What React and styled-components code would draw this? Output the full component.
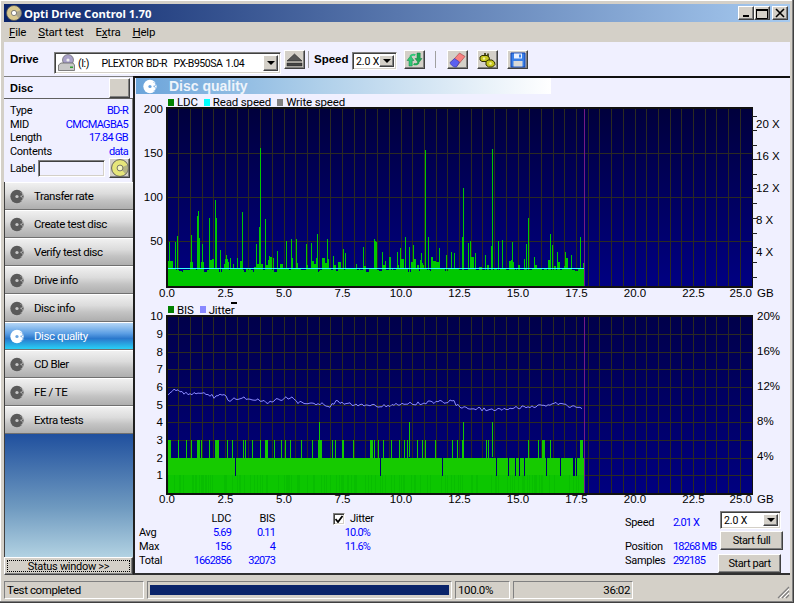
import styled, { createGlobalStyle, css } from "styled-components";

const GlobalStyle = createGlobalStyle`
  html, body { margin: 0; padding: 0; background: #d4d0c8; overflow: hidden; }
  body { font-family: Roboto, "Liberation Sans", Arial, sans-serif; font-size: 11px; letter-spacing: -0.3px; color: #000; }
  * { box-sizing: border-box; }
`;

const raised = css`
  background: #d4d0c8;
  border: 1px solid;
  border-color: #fff #404040 #404040 #fff;
  box-shadow: inset -1px -1px 0 #808080;
`;

const sunken = css`
  border: 1px solid;
  border-color: #808080 #fff #fff #808080;
  box-shadow: inset 1px 1px 0 #404040, inset -1px -1px 0 #d4d0c8;
`;

const Window = styled.div`
  width: 794px;
  height: 603px;
  padding: 4px;
  display: flex;
  flex-direction: column;
  background: #d4d0c8;
  box-shadow: inset -1px -1px 0 #404040, inset -2px -2px 0 #808080, inset 1px 1px 0 #fff;
`;

const TitleBar = styled.div`
  height: 18px;
  flex: none;
  display: flex;
  align-items: center;
  padding: 0 2px;
  background: linear-gradient(90deg, #0a246a, #a6caf0);
  color: #fff;
`;

const TitleText = styled.span`
  margin-left: 2px;
  font-family: "Noto Sans", sans-serif;
  font-weight: 700;
  font-size: 11.3px;
  letter-spacing: 0;
  white-space: nowrap;
`;

const WindowButtons = styled.div`
  margin-left: auto;
  display: flex;
`;

const WindowButton = styled.button`
  ${raised}
  width: 16px;
  height: 14px;
  padding: 0;
  margin-left: ${(p) => (p.$gap ? "2px" : "0")};
  display: flex;
  align-items: center;
  justify-content: center;
`;

const MenuBar = styled.div`
  height: 20px;
  flex: none;
  display: flex;
  align-items: center;
  padding-left: 5px;
  gap: 12px;
  font-size: 11.5px;
  letter-spacing: -0.2px;
`;

const MenuItem = styled.span`
  u { text-decoration: underline; }
`;

const Toolbar = styled.div`
  height: 34px;
  flex: none;
  display: flex;
  align-items: flex-start;
  background: #f0f0ff;
  padding: 8px 0 0 6px;
`;

const ToolLabel = styled.b`
  font-family: "Liberation Sans", Arial, sans-serif;
  font-size: 11.5px;
  letter-spacing: 0;
  line-height: 18px;
  width: ${(p) => p.$w}px;
  margin-left: ${(p) => p.$left || 0}px;
  flex: none;
`;

const Combo = styled.div`
  ${sunken}
  background: #fff;
  display: flex;
  align-items: center;
  width: ${(p) => p.$w}px;
  height: ${(p) => p.$h}px;
  margin-top: ${(p) => p.$top || 0}px;
  margin-left: ${(p) => p.$left || 0}px;
  padding: 2px 2px 2px 3px;
  flex: none;
  white-space: nowrap;
`;

const ComboText = styled.span`
  flex: 1;
  min-width: 0;
  display: flex;
  align-items: center;
  gap: ${(p) => (p.$gap ? "3px" : "0")};
  font-size: ${(p) => (p.$gap ? "10.5px" : "10.5px")};
  letter-spacing: ${(p) => (p.$gap ? "-0.45px" : "-0.1px")};
  word-spacing: ${(p) => (p.$gap ? "1px" : "0")};
`;

const ComboArrow = styled.span`
  ${raised}
  width: 15px;
  height: 100%;
  flex: none;
  display: flex;
  align-items: center;
  justify-content: center;
  &::after {
    content: "";
    border: 4px solid transparent;
    border-top: 4px solid #000;
    border-bottom: 0;
  }
`;

const ToolButton = styled.button`
  ${raised}
  width: 21px;
  height: 19px;
  padding: 0;
  margin-left: ${(p) => p.$left || 0}px;
  flex: none;
  display: flex;
  align-items: center;
  justify-content: center;
`;

const ToolSep = styled.span`
  width: 1px;
  height: 17px;
  margin: 1px 0 0 ${(p) => p.$left}px;
  background: #a0a0a0;
  flex: none;
`;

const Body = styled.div`
  height: 499px;
  flex: none;
  display: flex;
`;

const Sidebar = styled.div`
  width: 129px;
  flex: none;
  display: flex;
  flex-direction: column;
  background: #f0f0ff;
`;

const DiscHeader = styled.div`
  height: 23px;
  flex: none;
  display: flex;
  align-items: center;
  justify-content: space-between;
  padding: 0 3px 0 6px;
  border-top: 1px solid #808080;
  border-bottom: 1px solid #606060;
  font-family: "Liberation Sans", Arial, sans-serif;
  font-weight: 700;
  font-size: 11px;
  letter-spacing: 0;
`;

const SquareButton = styled.span`
  ${raised}
  width: 21px;
  height: 20px;
  display: flex;
  align-items: center;
  justify-content: center;
  flex: none;
`;

const DiscInfo = styled.div`
  height: 83px;
  flex: none;
  padding: 5px 4px 0 6px;
  border-right: 1px solid #808080;
`;

const InfoRow = styled.div`
  height: 13.6px;
  display: flex;
  justify-content: space-between;
  align-items: center;
`;

const InfoValue = styled.span`
  color: #0000ff;
  letter-spacing: -0.7px;
`;

const LabelRow = styled.div`
  display: flex;
  align-items: center;
`;

const LabelCaption = styled.span`
  width: 28px;
  flex: none;
`;

const LabelInput = styled.span`
  ${sunken}
  width: 67px;
  height: 17px;
  margin-right: 4px;
  background: #f0f0ff;
  flex: none;
`;

const Nav = styled.div`
  flex: none;
  border-left: 1px solid #404040;
`;

const NavButton = styled.div`
  height: 28px;
  display: flex;
  align-items: center;
  padding-left: 5px;
  gap: 9px;
  font-size: 11.5px;
  letter-spacing: -0.45px;
  border-top: 1px solid #fff;
  border-bottom: 1px solid #707070;
  color: ${(p) => (p.$active ? "#fff" : "#000")};
  background: ${(p) =>
    p.$active
      ? "linear-gradient(180deg, #b4d6f6 0%, #5c9fe4 40%, #2a78cc 60%, #28d0f6 100%)"
      : "linear-gradient(180deg, #f0f0f0 0%, #dcdcdc 40%, #c4c4c4 65%, #aeaeae 100%)"};
`;

const Filler = styled.div`
  flex: 1;
  border-left: 1px solid #404040;
  background: linear-gradient(180deg, #20509e 0%, #6f9ac0 60%, #b2d2e2 100%);
`;

const StatusWindowButton = styled.div`
  ${raised}
  height: 18px;
  flex: none;
  display: flex;
  padding: 2px;
  span {
    flex: 1;
    text-align: center;
    line-height: 11px;
    border: 1px dotted #000;
  }
`;

const Main = styled.div`
  flex: 1;
  display: flex;
  flex-direction: column;
  background: #f0f0ff;
  padding-left: 1px;
  border-left: 2px solid #202020;
  border-top: 2px solid #101010;
  border-bottom: 2px solid #303030;
`;

const Banner = styled.div`
  width: 415px;
  height: 16px;
  flex: none;
  margin-bottom: 2px;
  display: flex;
  align-items: center;
  padding-left: 7px;
  gap: 11px;
  background: linear-gradient(90deg, #6ba4da 0%, #b0d0ea 45%, #fff 100%);
  color: #eef4fb;
  font-family: "Liberation Sans", Arial, sans-serif;
  font-weight: 700;
  font-size: 14px;
  letter-spacing: 0;
`;

const Legend = styled.div`
  height: ${(p) => p.$h}px;
  flex: none;
  display: flex;
  align-items: center;
  gap: 3px;
  padding-left: 32px;
  font-size: 11.5px;
  letter-spacing: -0.15px;
  position: relative;
`;

const Swatch = styled.i`
  width: 6px;
  height: 7px;
  background: ${(p) => p.$c};
  flex: none;
`;

const LegendText = styled.span`
  margin-right: 3px;
`;

const Marker = styled.i`
  position: absolute;
  left: 95px;
  top: -1px;
  width: 6px;
  height: 2px;
  background: #000;
`;

const PlotSvg = styled.svg`
  display: block;
  flex: none;
  overflow: visible;
  text { font-family: "Liberation Sans", Arial, sans-serif; font-size: 11.5px; letter-spacing: 0; fill: #000; }
`;

const Stats = styled.div`
  height: 62px;
  flex: none;
  display: flex;
  padding-left: 3px;
`;

const StatGrid = styled.div`
  display: grid;
  grid-template-columns: 40px 52px 44px 58px 37px;
  grid-template-rows: 13px 14px 14px 14px;
  align-items: center;
  padding-top: 1px;
  flex: none;
`;

const Num = styled.span`
  text-align: ${(p) => (p.$left ? "left" : "right")};
  color: ${(p) => (p.$head ? "#000" : "#0000ff")};
  letter-spacing: ${(p) => (p.$head ? "-0.3px" : "-0.85px")};
  white-space: nowrap;
`;

const JitterCheck = styled.label`
  display: flex;
  align-items: center;
  gap: 5px;
  white-space: nowrap;
`;

const CheckBox = styled.span`
  ${sunken}
  width: 12px;
  height: 12px;
  background: #fff;
  display: flex;
  align-items: center;
  justify-content: center;
  flex: none;
`;

const Readout = styled.div`
  display: grid;
  grid-template-columns: 48px 42px;
  grid-template-rows: 24px 14px 14px;
  align-items: start;
  width: 90px;
  flex: none;
  margin-left: 255px;
  padding-top: 5px;
  white-space: nowrap;
`;

const Actions = styled.div`
  margin-left: auto;
  margin-right: 7px;
  width: 65px;
  flex: none;
  display: flex;
  flex-direction: column;
  align-items: flex-start;
`;

const ActionButton = styled.button`
  ${raised}
  width: 63px;
  height: 19px;
  padding: 0;
  margin-left: ${(p) => p.$left || 0}px;
  margin-top: ${(p) => p.$top}px;
  font-family: inherit;
  font-size: 11px;
  letter-spacing: -0.4px;
  color: #000;
`;

const StatusBar = styled.div`
  height: 18px;
  flex: none;
  margin-top: 6px;
  display: flex;
  gap: 3px;
  font-size: 11.5px;
  letter-spacing: -0.4px;
`;

const StatusCell = styled.div`
  width: ${(p) => p.$w}px;
  flex: none;
  display: flex;
  align-items: center;
  justify-content: ${(p) => (p.$right ? "flex-end" : "flex-start")};
  padding: 0 2px;
  border: 1px solid;
  border-color: #808080 #fff #fff #808080;
  white-space: nowrap;
`;

const ProgressFill = styled.div`
  width: 100%;
  height: 10px;
  background: #0a246a;
`;

const Grip = styled.svg`
  margin-left: auto;
  align-self: flex-end;
`;

function mulberry(seed) {
  let s = seed;
  return () => {
    s = (s * 1664525 + 1013904223) >>> 0;
    return s / 4294967296;
  };
}

const X_STEP = 585 / 50;
const PLOT_X = 31;
const DATA_END = 417;

// [x, height] of the tall LDC spikes, in plot pixels
const LDC_SPIKES = [
  [2, 44], [8, 44], [10, 50], [24, 51], [30, 70], [31, 75], [32, 48], [35, 42], [42, 68], [48, 86], [49, 68],
  [53, 36], [59, 31], [63, 28], [75, 74], [89, 42], [92, 59], [93, 138], [98, 67], [102, 30], [110, 35], [119, 45],
  [124, 47], [129, 47], [139, 42], [144, 43], [150, 52], [160, 47], [166, 30], [176, 37], [178, 33], [196, 39],
  [207, 47], [208, 45], [209, 44], [215, 34], [230, 34], [233, 38], [238, 49], [242, 39], [246, 41], [254, 33],
  [258, 136], [261, 49], [272, 38], [279, 31], [284, 34], [287, 33], [295, 49], [296, 98], [301, 43], [303, 45],
  [308, 33], [318, 31], [324, 40], [325, 137], [331, 45], [335, 46], [345, 44], [357, 27], [359, 42], [361, 68],
  [367, 29], [383, 52], [385, 41], [390, 34], [398, 34], [404, 31], [413, 49],
];

const BIS_THREE = [
  0, 1, 2, 3, 11, 19, 24, 30, 31, 32, 34, 42, 48, 49, 50, 51, 60, 65, 76, 78, 85, 93, 98, 99, 100, 107, 114, 118, 123,
  134, 145, 151, 152, 153, 154, 165, 168, 175, 176, 186, 203, 204, 205, 207, 211, 216, 224, 232, 237, 240, 250, 255,
  258, 268, 285, 290, 295, 296, 319, 321, 361, 371, 375, 376, 377, 383, 413, 414, 415,
];
const BIS_FOUR = [152, 242, 296, 325];
const BIS_GAPS = [68, 213, 275, 329, 341, 348, 352, 357, 379, 393, 406, 407, 409];

// control points of the jitter trace
const JITTER_POINTS = [
  [1, 80], [7, 73], [18, 78], [40, 77], [48, 82], [58, 77], [61, 84], [78, 82], [101, 86], [123, 81], [131, 86],
  [155, 88], [163, 91], [168, 86], [208, 90], [286, 85], [291, 90], [308, 93], [331, 94], [358, 91], [389, 88], [415, 92],
];

function jitterLine() {
  const rnd = mulberry(77);
  const pts = [];
  for (let x = 1; x <= 415; x += 2) {
    let i = 0;
    while (i < JITTER_POINTS.length - 2 && JITTER_POINTS[i + 1][0] < x) i++;
    const [x0, y0] = JITTER_POINTS[i];
    const [x1, y1] = JITTER_POINTS[i + 1];
    const y = y0 + ((y1 - y0) * (x - x0)) / (x1 - x0) + (rnd() - 0.5) * 3.5;
    pts.push(`${x},${y.toFixed(1)}`);
  }
  return pts.join(" ");
}

function ldcPath() {
  const rnd = mulberry(12345);
  let d = "";
  let x = 0;
  while (x < DATA_END) {
    const r = rnd();
    let h = 16 + Math.floor(rnd() * 2);
    let w = 1 + Math.floor(rnd() * 3);
    if (r < 0.35) {
      h = 18 + Math.floor(rnd() * 12);
      w = 1 + Math.floor(rnd() * 3);
    } else if (r < 0.45) h = 14 + Math.floor(rnd() * 2);
    for (let i = 0; i < w && x < DATA_END; i++, x++) d += `M${x + 0.5} 178V${178 - h}`;
  }
  LDC_SPIKES.forEach(([sx, h]) => {
    d += `M${sx + 0.5} 178V${178 - h}`;
  });
  return d;
}

function Frame({ height, gridY, children, id, top, bottom }) {
  const vertical = Array.from({ length: 49 }, (_, i) => (i + 1) * X_STEP);
  return (
    <>
      <defs>
        <linearGradient id={id} x1="0" y1="0" x2="0" y2="1">
          <stop offset="0" stopColor={top} />
          <stop offset="1" stopColor={bottom} />
        </linearGradient>
      </defs>
      <rect x="0" y="0" width="585" height={height} fill={`url(#${id})`} />
      <g stroke="#2b2a22" strokeWidth="1" shapeRendering="crispEdges">
        {vertical.map((x) => (
          <line key={x} x1={x} x2={x} y1="0" y2={height} />
        ))}
        {gridY.map((y) => (
          <line key={y} x1="0" x2="585" y1={y} y2={y} />
        ))}
      </g>
      {children}
      <line x1={DATA_END + 0.5} x2={DATA_END + 0.5} y1="0" y2={height} stroke="#741a86" shapeRendering="crispEdges" />
      <g fill="#101010" shapeRendering="crispEdges">
        <rect x="-1" y="-1" width="587" height="2" />
        <rect x="-1" y={height} width="587" height="2" />
        <rect x="-1" y="-1" width="2" height={height + 2} />
        <rect x="585" y="-1" width="1" height={height + 2} />
      </g>
    </>
  );
}

function XLabels({ y }) {
  const labels = [];
  for (let i = 0; i < 10; i++) labels.push(i * 2.5);
  return (
    <>
      {labels.map((v) => (
        <text key={v} x={(v / 25) * 585} y={y} textAnchor="middle">
          {v.toFixed(1)}
        </text>
      ))}
      <text x="585" y={y} textAnchor="end">25.0</text>
      <text x="590" y={y}>GB</text>
    </>
  );
}

function LdcChart() {
  return (
    <PlotSvg width="654" height="195" viewBox="0 0 654 195">
      <g transform={`translate(${PLOT_X},0)`}>
        <Frame id="ldcBg" top="#00003c" bottom="#000082" height={178} gridY={[45, 89, 133]}>
          <path d={ldcPath()} stroke="#00c800" strokeWidth="1" fill="none" shapeRendering="crispEdges" />
          <rect x="0" y="160" width={DATA_END} height="1" fill="#30ffff" shapeRendering="crispEdges" />
        </Frame>
        {[[50, 133], [100, 89], [150, 45], [200, 1]].map(([v, y]) => (
          <text key={v} x="-4" y={y + 4} textAnchor="end">{v}</text>
        ))}
        {[["20 X", 16], ["16 X", 48], ["12 X", 80], ["8 X", 112], ["4 X", 144]].map(([t, y]) => (
          <text key={t} x="589" y={y + 4}>{t}</text>
        ))}
        {[8, 22, 37, 51, 66, 80, 95, 110, 125, 139, 154, 169].map((y) => (
          <line key={y} x1="585" x2="590" y1={y} y2={y} stroke="#202020" shapeRendering="crispEdges" />
        ))}
        <XLabels y={189} />
      </g>
    </PlotSvg>
  );
}

function BisChart() {
  const unit = 17.67;
  const rows = Array.from({ length: 10 }, (_, i) => i + 1);
  const rnd = mulberry(9);
  const stripes = Array.from({ length: 140 }, () => Math.floor(rnd() * DATA_END));
  return (
    <PlotSvg width="654" height="195" viewBox="0 0 654 195">
      <g transform={`translate(${PLOT_X},0)`}>
        <Frame id="bisBg" top="#00004a" bottom="#000080" height={177} gridY={rows.slice(0, 9).map((v) => Math.round(177 - v * unit))}>
          <g shapeRendering="crispEdges">
            {BIS_THREE.map((x) => (
              <rect key={x} x={x} y={Math.round(177 - 3 * unit)} width="1" height={Math.round(unit)} fill="#14c800" />
            ))}
            {BIS_FOUR.map((x) => (
              <rect key={x} x={x} y={Math.round(177 - 4 * unit)} width="1" height={Math.round(2 * unit)} fill="#14c800" />
            ))}
            <rect x="0" y={Math.round(177 - 2 * unit)} width={DATA_END} height={Math.round(unit)} fill="#16ca00" />
            <rect x="0" y={Math.round(177 - unit)} width={DATA_END} height={Math.round(unit)} fill="#0cc600" />
            {stripes.map((x, i) => (
              <rect key={i} x={x} y={Math.round(177 - unit)} width="1" height={Math.round(unit)} fill="#08be00" />
            ))}
            {BIS_GAPS.map((x) => (
              <rect key={x} x={x} y={Math.round(177 - 2 * unit)} width="1" height={Math.round(unit)} fill="#000070" />
            ))}
          </g>
          <polyline points={jitterLine()} fill="none" stroke="#8a8aff" strokeWidth="1" />
        </Frame>
        {rows.map((v) => (
          <text key={v} x="-4" y={177 - v * unit + 4} textAnchor="end">{v}</text>
        ))}
        {[["20%", 0], ["16%", 35], ["12%", 70], ["8%", 105], ["4%", 140]].map(([t, y]) => (
          <text key={t} x="590" y={y + 4}>{t}</text>
        ))}
        <XLabels y={187} />
      </g>
    </PlotSvg>
  );
}

function CdIcon({ size = 16, tint = "#d8d8d0", hub = "#fff" }) {
  return (
    <svg width={size} height={size} viewBox="0 0 16 16">
      <circle cx="8" cy="8" r="7.5" fill={tint} stroke="#555" strokeWidth="0.8" />
      <path d="M8 8 L15 5 A7.5 7.5 0 0 1 13 13.5 Z" fill="#888" opacity="0.55" />
      <circle cx="8" cy="8" r="2.6" fill={hub} stroke="#555" strokeWidth="0.7" />
    </svg>
  );
}

function NavIcon({ active }) {
  const c = active ? "#fff" : "#5a5a5a";
  const hole = active ? "#6aa4e0" : "#c8c8c8";
  return (
    <svg width="15" height="15" viewBox="0 0 14 14">
      <circle cx="6.5" cy="7" r="6.2" fill={c} />
      <circle cx="6.5" cy="7" r="1.5" fill={hole} />
      <path d="M9.5 3 L13.5 4.5 L11 7 L13.5 10 L10 12 Z" fill={hole} opacity="0.8" />
      <circle cx="10" cy="9.2" r="1.7" fill={c} />
      <circle cx="10" cy="4.8" r="1.4" fill={c} />
    </svg>
  );
}

const DriveGlyph = styled.svg`
  flex: none;
`;

function DriveIcon() {
  return (
    <DriveGlyph width="17" height="18" viewBox="0 0 17 18">
      <circle cx="10" cy="6" r="5.5" fill="#a8a0c8" stroke="#555" strokeWidth="0.6" />
      <circle cx="10" cy="6" r="1.6" fill="#eee" />
      <path d="M0.5 11 L3 9 H15 L16.5 11 V16.5 H0.5 Z" fill="#c8c8c8" stroke="#555" strokeWidth="0.7" />
      <rect x="12" y="12.5" width="3" height="1.5" fill="#30a030" />
    </DriveGlyph>
  );
}

function EjectIcon() {
  return (
    <svg width="17" height="14" viewBox="0 0 17 14">
      <path d="M8.5 1 L16 8 H1 Z" fill="#555" stroke="#222" strokeWidth="0.6" />
      <rect x="1" y="10" width="15" height="3" fill="#444" stroke="#222" strokeWidth="0.5" />
    </svg>
  );
}

function RefreshIcon() {
  return (
    <svg width="17" height="15" viewBox="0 0 17 15">
      <path d="M1 8.5 L4.5 4 L8 8.5 H6.2 V14 H3 V8.5 Z" fill="#30c878" stroke="#108040" strokeWidth="0.5" />
      <path d="M3.5 4 C5 1.5 8 1 10 2.5 L8.5 4 C7.5 3.4 6 3.5 5.5 5 Z" fill="#30c878" />
      <path d="M9 6.5 L12.5 11 L16 6.5 H14.2 V1 H11 V6.5 Z" fill="#1fa855" stroke="#108040" strokeWidth="0.5" />
      <path d="M13.5 11 C12 13.5 9 14 7 12.5 L8.5 11 C9.5 11.6 11 11.5 11.5 10 Z" fill="#1fa855" />
    </svg>
  );
}

function EraserIcon() {
  return (
    <svg width="17" height="16" viewBox="0 0 17 16">
      <path d="M10.5 1 L16 4.5 L8 14 L2 10.5 Z" fill="#f88080" stroke="#a04040" strokeWidth="0.6" />
      <path d="M5.5 6.5 L10.5 10 L7.5 15 C5 15.5 1.5 13 1 10.5 Z" fill="#5a60f0" stroke="#3030a0" strokeWidth="0.6" />
    </svg>
  );
}

function KeysIcon() {
  return (
    <svg width="17" height="16" viewBox="0 0 17 16">
      <path d="M6 1 V4 M9 1.5 V5" stroke="#303000" strokeWidth="1.6" />
      <path d="M1 5 L3 3.5 H8 L10 5 L10.5 7.5 L8 9.5 H3 L1 8 Z" fill="#c8c820" stroke="#303000" />
      <path d="M7 9.5 L9 8 H13 L15.5 10 L16 12.5 L13.5 15 H9.5 L7 13 Z" fill="#c8c820" stroke="#303000" />
      <circle cx="5" cy="6.5" r="1.2" fill="#f0f0a0" />
      <circle cx="11.5" cy="11.5" r="1.2" fill="#f0f0a0" />
    </svg>
  );
}

function FloppyIcon() {
  return (
    <svg width="16" height="16" viewBox="0 0 16 16">
      <path d="M1 1 H15 V15 H1 Z" fill="#3a80e8" stroke="#1040b0" />
      <rect x="4" y="1.5" width="8" height="5" fill="#e8f0ff" />
      <rect x="9" y="2.5" width="2" height="3" fill="#3a80e8" />
      <rect x="3.5" y="9" width="9" height="5.5" fill="#d8d8d8" />
    </svg>
  );
}

const NAV_ITEMS = [
  "Transfer rate", "Create test disc", "Verify test disc", "Drive info", "Disc info",
  "Disc quality", "CD Bler", "FE / TE", "Extra tests",
];

export default function App() {
  return (
    <Window>
      <GlobalStyle />
      <TitleBar>
        <CdIcon size={16} tint="#d8c890" />
        <TitleText>Opti Drive Control 1.70</TitleText>
        <WindowButtons>
          <WindowButton aria-label="minimize">
            <svg width="10" height="10"><rect x="2" y="7" width="6" height="2" fill="#000" /></svg>
          </WindowButton>
          <WindowButton aria-label="maximize">
            <svg width="12" height="11"><path d="M0.5 1.5H11.5V10.5H0.5Z" fill="none" stroke="#000" /><rect x="0" y="1" width="12" height="2" fill="#000" /></svg>
          </WindowButton>
          <WindowButton $gap aria-label="close">
            <svg width="10" height="10"><path d="M1 1L9 9M9 1L1 9" stroke="#000" strokeWidth="1.6" /></svg>
          </WindowButton>
        </WindowButtons>
      </TitleBar>

      <MenuBar>
        <MenuItem><u>F</u>ile</MenuItem>
        <MenuItem><u>S</u>tart test</MenuItem>
        <MenuItem>E<u>x</u>tra</MenuItem>
        <MenuItem><u>H</u>elp</MenuItem>
      </MenuBar>

      <Toolbar>
        <ToolLabel $w={44}>Drive</ToolLabel>
        <Combo $w={227} $h={22} $top={2}>
          <ComboText $gap>
            <DriveIcon />
            (I:)&nbsp;&nbsp;&nbsp; PLEXTOR BD-R&nbsp; PX-B950SA 1.04
          </ComboText>
          <ComboArrow />
        </Combo>
        <ToolButton $left={3}><EjectIcon /></ToolButton>
        <ToolSep $left={3} />
        <ToolLabel $w={38} $left={5}>Speed</ToolLabel>
        <Combo $w={45} $h={18} $top={2}>
          <ComboText>2.0 X</ComboText>
          <ComboArrow />
        </Combo>
        <ToolButton $left={7}><RefreshIcon /></ToolButton>
        <ToolSep $left={10} />
        <ToolButton $left={11}><EraserIcon /></ToolButton>
        <ToolButton $left={9}><KeysIcon /></ToolButton>
        <ToolButton $left={9}><FloppyIcon /></ToolButton>
      </Toolbar>

      <Body>
        <Sidebar>
          <DiscHeader>
            Disc
            <SquareButton />
          </DiscHeader>
          <DiscInfo>
            <InfoRow>Type<InfoValue>BD-R</InfoValue></InfoRow>
            <InfoRow>MID<InfoValue>CMCMAGBA5</InfoValue></InfoRow>
            <InfoRow>Length<InfoValue>17.84 GB</InfoValue></InfoRow>
            <InfoRow>Contents<InfoValue>data</InfoValue></InfoRow>
            <LabelRow>
              <LabelCaption>Label</LabelCaption>
              <LabelInput />
              <SquareButton><CdIcon size={18} tint="#e6e67a" hub="#f8f8c0" /></SquareButton>
            </LabelRow>
          </DiscInfo>
          <Nav>
            {NAV_ITEMS.map((item) => (
              <NavButton key={item} $active={item === "Disc quality"}>
                <NavIcon active={item === "Disc quality"} />
                <span>{item}</span>
              </NavButton>
            ))}
          </Nav>
          <Filler />
          <StatusWindowButton><span>Status window &gt;&gt;</span></StatusWindowButton>
        </Sidebar>

        <Main>
          <Banner>
            <NavIcon active />
            Disc quality
          </Banner>
          <Legend $h={12}>
            <Swatch $c="#008000" /><LegendText>LDC</LegendText>
            <Swatch $c="#00ffff" /><LegendText>Read speed</LegendText>
            <Swatch $c="#808080" /><LegendText>Write speed</LegendText>
          </Legend>
          <LdcChart />
          <Legend $h={13}>
            <Swatch $c="#008000" /><LegendText>BIS</LegendText>
            <Swatch $c="#8888ff" /><LegendText>Jitter</LegendText>
            <Marker />
          </Legend>
          <BisChart />
          <Stats>
            <StatGrid>
              <span /><Num $head>LDC</Num><Num $head>BIS</Num><span />
              <JitterCheck>
                <CheckBox>
                  <svg width="8" height="8"><path d="M0.5 4L3 7L7.5 1" fill="none" stroke="#000" strokeWidth="1.8" /></svg>
                </CheckBox>
                Jitter
              </JitterCheck>
              <span>Avg</span><Num>5.69</Num><Num>0.11</Num><span /><Num>10.0%</Num>
              <span>Max</span><Num>156</Num><Num>4</Num><span /><Num>11.6%</Num>
              <span>Total</span><Num>1662856</Num><Num>32073</Num><span /><span />
            </StatGrid>
            <Readout>
              <span>Speed</span><Num $left>2.01 X</Num>
              <span>Position</span><Num $left>18268 MB</Num>
              <span>Samples</span><Num $left>292185</Num>
            </Readout>
            <Actions>
              <Combo $w={61} $h={18} $left={2}>
                <ComboText>2.0 X</ComboText>
                <ComboArrow />
              </Combo>
              <ActionButton $left={2} $top={2}>Start full</ActionButton>
              <ActionButton $top={4}>Start part</ActionButton>
            </Actions>
          </Stats>
        </Main>
      </Body>

      <StatusBar>
        <StatusCell $w={140}>Test completed</StatusCell>
        <StatusCell $w={305}><ProgressFill /></StatusCell>
        <StatusCell $w={55}>100.0%</StatusCell>
        <StatusCell $w={120} $right>36:02</StatusCell>
        <Grip width="14" height="14" viewBox="0 0 14 14">
          <path d="M13 2L2 13M13 6L6 13M13 10L10 13" stroke="#808080" strokeWidth="1.2" />
          <path d="M13 4L4 13M13 8L8 13" stroke="#fff" strokeWidth="1" />
        </Grip>
      </StatusBar>
    </Window>
  );
}
